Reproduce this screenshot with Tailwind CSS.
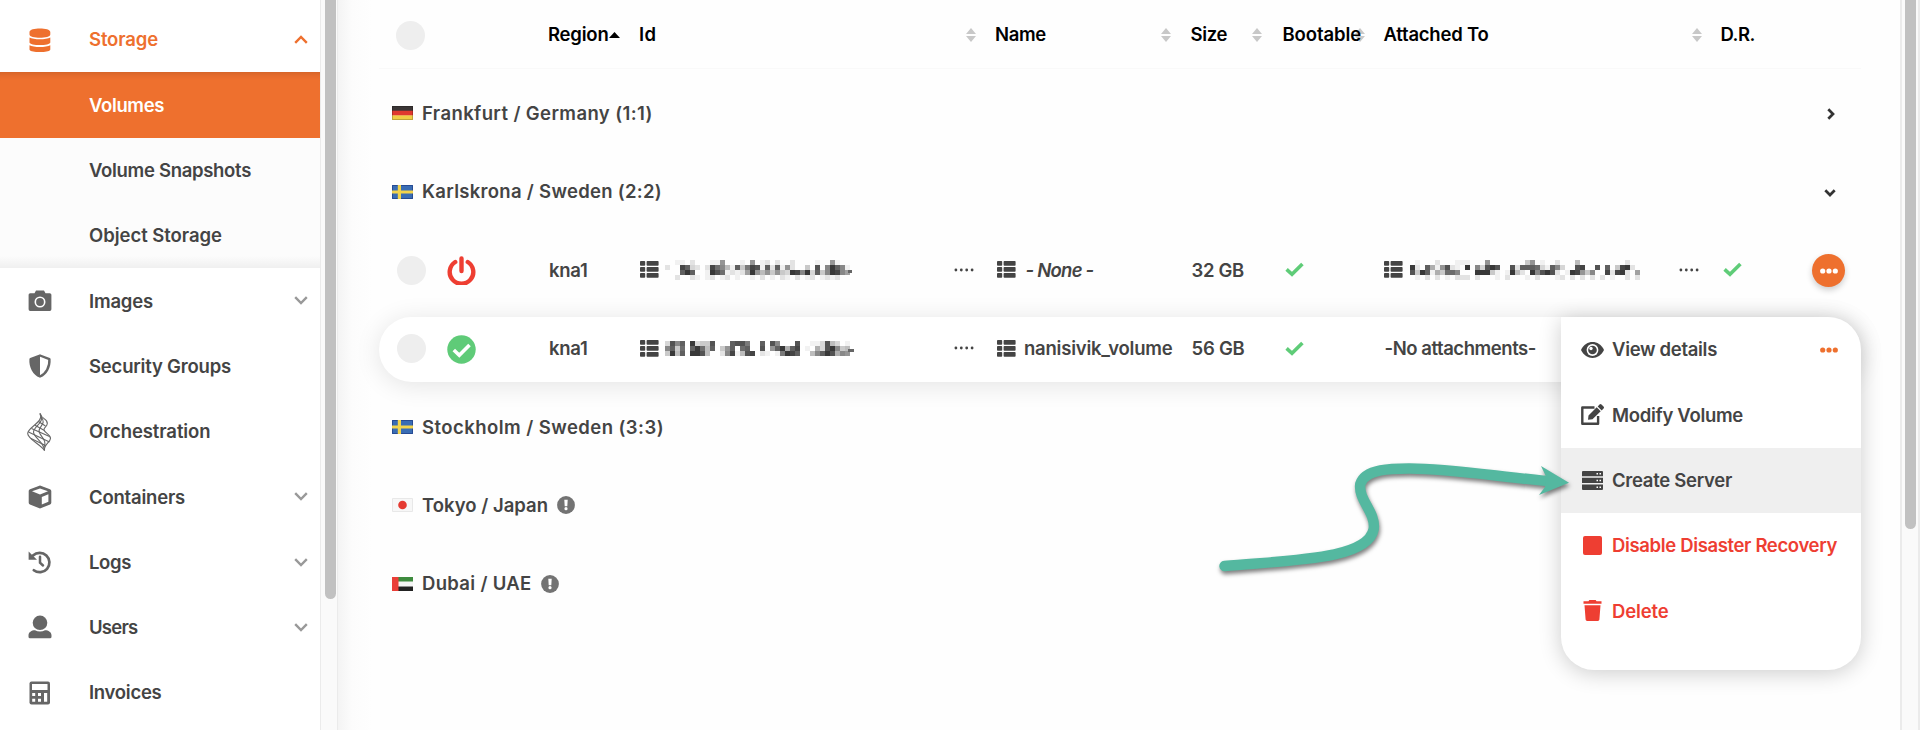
<!DOCTYPE html>
<html lang="en">
<head>
<meta charset="utf-8">
<title>Volumes</title>
<script src="https://cdn.jsdelivr.net/npm/@tailwindcss/browser@4"></script>
</head>
<body class="relative flex h-[730px] w-[1920px] overflow-hidden bg-[#fefefe] font-['Inter','Liberation_Sans',sans-serif] text-[18.5px] leading-none font-semibold text-[#444] whitespace-nowrap [&_svg]:shrink-0 [&_i]:shrink-0">

<svg class="hidden">
  <symbol id="chev" viewBox="0 0 14 9"><path d="M1.2 1.2 7 7l5.800-5.800" fill="none" stroke="currentColor" stroke-width="2.400"/></symbol>
  <symbol id="list" viewBox="0 0 19 17"><g fill="currentColor"><rect x="0" y="0" width="5.200" height="4.700" rx=".8"/><rect x="0" y="6" width="5.200" height="4.700" rx=".8"/><rect x="0" y="12" width="5.200" height="4.700" rx=".8"/><rect x="6.600" y="0" width="12" height="4.700" rx=".8"/><rect x="6.600" y="6" width="12" height="4.700" rx=".8"/><rect x="6.600" y="12" width="12" height="4.700" rx=".8"/></g></symbol>
  <symbol id="sort" viewBox="0 0 10 14"><path d="M0 6 5 0l5 6zM0 8h10l-5 6z" fill="#c8c8c8"/></symbol>
  <symbol id="check" viewBox="0 0 19 15"><path d="M1.600 7.400 7 12.300 17.400 2" fill="none" stroke="#5fcc78" stroke-width="3.600"/></symbol>
  <symbol id="dots4" viewBox="0 0 20 4"><g fill="#444"><circle cx="1.900" cy="2" r="1.400"/><circle cx="7.300" cy="2" r="1.400"/><circle cx="12.700" cy="2" r="1.400"/><circle cx="18.100" cy="2" r="1.400"/></g></symbol>
  <symbol id="dots3" viewBox="0 0 18 6"><g fill="currentColor"><circle cx="2.700" cy="3" r="2.600"/><circle cx="9" cy="3" r="2.600"/><circle cx="15.300" cy="3" r="2.600"/></g></symbol>
  <symbol id="warn" viewBox="0 0 18 18"><circle cx="9" cy="9" r="8.900" fill="#737373"/><path d="M7.300 3.700h3.400l-.4 6.500H7.700z" fill="#fff"/><circle cx="9" cy="12.700" r="1.600" fill="#fff"/></symbol>
  <symbol id="sweden" viewBox="0 0 21 14"><path d="M0 0h21v14H0z" fill="#3a6db4"/><path d="M.5.500h20v13H.5z" fill="none" stroke="#274b93"/><path d="M0 5.400h21v3.200H0zM5.800 0H9v14H5.800z" fill="#f3d44c"/></symbol>
  <linearGradient id="gloss" x1="0" y1="0" x2="0" y2="1"><stop offset="0" stop-color="#fff" stop-opacity=".3"/><stop offset="1" stop-color="#fff" stop-opacity="0"/></linearGradient>
</svg>

<!-- Sidebar -->
<aside class="flex h-full w-[320px] shrink-0 flex-col bg-white pt-[7px] text-[#444]">
  <a class="flex h-[65.3px] shrink-0 items-center pl-[27.5px] text-[#ee702e]">
    <svg class="size-6" viewBox="0 0 24 24" fill="currentColor"><path d="M1.500 4C1.500-.6 22.300-.6 22.300 4v2.500c0 4.300-20.800 4.300-20.800 0zM1.500 9.500c4 2.400 16.800 2.400 20.800 0v5c0 3.400-20.800 3.400-20.800 0zM1.500 17.200c4 2.400 16.800 2.400 20.800 0v4.300c0 3.400-20.800 3.400-20.800 0z"/></svg>
    <span class="ml-[37.5px]" data-w="69">Storage</span>
    <svg class="mr-[12.500px] ml-auto h-[9px] w-[14px] rotate-180"><use href="#chev"/></svg>
  </a>
  <div class="relative flex h-[196px] shrink-0 flex-col bg-[#fcfcfc] after:absolute after:inset-x-0 after:bottom-0 after:h-3 after:bg-linear-to-t after:from-black/[.05] after:to-transparent">
    <a class="flex h-[65.3px] items-center bg-[#ee702e] pl-[89px] text-white shadow-[inset_0_9px_9px_-9px_rgba(0,0,0,.2)]"><span data-w="75">Volumes</span></a>
    <a class="flex h-[65.3px] items-center pl-[89px]"><span data-w="162">Volume Snapshots</span></a>
    <a class="flex h-[65.3px] items-center pl-[89px]"><span data-w="133">Object Storage</span></a>
  </div>
  <a class="flex h-[65.3px] shrink-0 items-center pl-[27.5px]">
    <svg class="size-6 text-[#666]" viewBox="0 0 24 24"><path d="M2.200 4.200H6.500L8 1.400h8l1.500 2.800h4.300a1.600 1.600 0 0 1 1.600 1.600v14.500a1.600 1.600 0 0 1-1.600 1.600H2.200a1.600 1.600 0 0 1-1.600-1.600V5.800a1.600 1.600 0 0 1 1.600-1.600z" fill="currentColor"/><circle cx="12" cy="13" r="4.700" fill="none" stroke="#fff" stroke-width="1.600"/></svg>
    <span class="ml-[37.5px]" data-w="64">Images</span>
    <svg class="mr-[12.500px] ml-auto h-[9px] w-[14px] text-[#999]"><use href="#chev"/></svg>
  </a>
  <a class="flex h-[65.3px] shrink-0 items-center pl-[27.5px]">
    <svg class="size-6 text-[#666]" viewBox="0 0 24 24"><path d="M12 1.500 21.400 5.200C22 13 18 20 12 22.500 6 20 2 13 2.600 5.200z" fill="none" stroke="currentColor" stroke-width="2.400" stroke-linejoin="round"/><path d="M12 1.500 2.600 5.200C2 13 6 20 12 22.500z" fill="currentColor"/></svg>
    <span class="ml-[37.5px]" data-w="142">Security Groups</span>
  </a>
  <a class="flex h-[65.3px] shrink-0 items-center pl-[27px]">
    <svg class="h-[38px] w-[25px] text-[#666]" viewBox="0 0 25 38" fill="none" stroke="currentColor" stroke-width="1.100"><path d="M13 .500C14 6 20.800 5.500 20.300 10.500 20 14 16.500 14.500 17 17c1 3.500 6.800 4.500 6.500 8.500S16.500 31.500 17.500 37.500"/><path d="M13 .500C17.500 9 .7 14 .7 20.500.7 26 13 31 17.500 37.500"/><path d="M13 .500C19 9 6.500 13.500 6.500 19S17 28.500 17.500 37.500"/><path d="M14 4C20 10 12 13.500 12 18s9 9.500 5 16"/><path d="M11.800 8.800 18.500 13M8 12.200l9 5M4.500 15.500l18 8M1.500 19l21 10M4 25.500l14.500 7"/></svg>
    <span class="ml-[37px]" data-w="121.5">Orchestration</span>
  </a>
  <a class="flex h-[65.3px] shrink-0 items-center pl-[27.5px]">
    <svg class="size-6 text-[#666]" viewBox="0 0 24 24"><path d="M12 .6 22 4.200a2 2 0 0 1 1.300 1.900v11.600a2 2 0 0 1-1.200 1.800L12 23.600 1.900 19.500a2 2 0 0 1-1.200-1.800V6.100A2 2 0 0 1 2 4.200z" fill="currentColor"/><path d="M12 3.500 20 6.300 12 9.500 4 6.300zM13.800 12l6.600-2.700v7.500l-6.600 2.800z" fill="#fff"/></svg>
    <span class="ml-[37.5px]" data-w="96">Containers</span>
    <svg class="mr-[12.500px] ml-auto h-[9px] w-[14px] text-[#999]"><use href="#chev"/></svg>
  </a>
  <a class="flex h-[65.3px] shrink-0 items-center pl-[27.5px]">
    <svg class="size-6 text-[#666]" viewBox="0 0 24 24"><path d="M5 5.500A9.700 9.700 0 1 1 5.800 20.200" fill="none" stroke="currentColor" stroke-width="2.700" stroke-linecap="round"/><path d="M.6 1.500v8.300H9z" fill="currentColor"/><path d="M12 6.800v6l3 2.700" fill="none" stroke="currentColor" stroke-width="2.500" stroke-linecap="round"/></svg>
    <span class="ml-[37.5px]" data-w="42">Logs</span>
    <svg class="mr-[12.500px] ml-auto h-[9px] w-[14px] text-[#999]"><use href="#chev"/></svg>
  </a>
  <a class="flex h-[65.3px] shrink-0 items-center pl-[27.5px]">
    <svg class="size-6 text-[#666]" viewBox="0 0 24 24" fill="currentColor"><circle cx="12" cy="7.800" r="7.300"/><path d="M7 15.200c3 1.700 7 1.700 10 0 3.500 0 6.500 2 6.500 5v1.600a1.500 1.500 0 0 1-1.500 1.500H2A1.500 1.500 0 0 1 .5 21.800v-1.600c0-3 3-5 6.500-5z"/></svg>
    <span class="ml-[37.5px]" data-w="48.500">Users</span>
    <svg class="mr-[12.500px] ml-auto h-[9px] w-[14px] text-[#999]"><use href="#chev"/></svg>
  </a>
  <a class="flex h-[65.3px] shrink-0 items-center pl-[27.5px]">
    <svg class="size-6 text-[#666]" viewBox="0 0 24 24"><rect x="1.500" y=".6" width="20.500" height="23" rx="2" fill="currentColor"/><path d="M4 3h15.500v6H4zM4.200 12h3v3h-3zM10 12h3v3h-3zM4.200 17.800h3v3h-3zM10 17.800h3v3h-3zM16 12h3.200v8.800H16z" fill="#fff"/></svg>
    <span class="ml-[37.5px]" data-w="72.500">Invoices</span>
  </a>
</aside>

<!-- Sidebar scrollbar -->
<div class="flex h-full w-[18px] shrink-0 border-x border-[#ebebeb] bg-[#fafafa] pl-1">
  <div class="h-[599px] w-[11px] rounded-b-full bg-[#c1c1c1]"></div>
</div>

<main class="h-full w-[1562px] shrink-0 bg-linear-to-r from-[#f4f4f4] via-[#fcfcfc] via-[14px] to-[#fefefe] to-[34px] pl-[41px]">
  <!-- Column headings -->
  <div class="flex h-[69px] w-[1482px] items-center border-b border-[#f9f9f9] bg-[#fefefe] pt-px pl-[16.500px] text-black">
    <i class="mt-px size-[29px] rounded-full bg-[#eee]"></i>
    <span class="ml-[123.500px]" data-w="60.500">Region</span><svg class="h-[6px] w-[11px]" viewBox="0 0 11 6"><path d="M0 6 5.500 0 11 6z"/></svg>
    <div class="ml-[19.500px] flex w-[356px] items-center"><span data-w="17.500">Id</span><svg class="mr-[19.500px] ml-auto h-3.5 w-2.5"><use href="#sort"/></svg></div>
    <div class="flex w-[195.500px] items-center"><span data-w="51">Name</span><svg class="mr-[19.500px] ml-auto h-3.5 w-2.5"><use href="#sort"/></svg></div>
    <div class="flex w-[92px] items-center"><span data-w="36.500">Size</span><svg class="mr-[20.500px] ml-auto h-3.5 w-2.5"><use href="#sort"/></svg></div>
    <div class="flex w-[101px] items-center"><span class="relative z-10" data-w="78.500">Bootable</span><svg class="-ml-[6px] h-3.5 w-2.5"><use href="#sort"/></svg></div>
    <div class="flex w-[337px] items-center"><span data-w="105">Attached To</span><svg class="mr-[19px] ml-auto h-3.5 w-2.5"><use href="#sort"/></svg></div>
    <span data-w="34.500">D.R.</span>
  </div>

  <div class="flex w-[1482px] flex-col pt-[6px]">
    <div class="flex h-[78.4px] items-center pr-[26px] pb-0.5 pl-[13px]">
      <svg class="mr-[9px] h-3.5 w-[21px]" viewBox="0 0 21 14"><path d="M0 0h21v5H0z" fill="#3a3535"/><path d="M0 4.700h21v5H0z" fill="#e0382f"/><path d="M0 9.400h21V14H0z" fill="#f0cd45"/><path d="M0 0h21v7H0z" fill="url(#gloss)"/><path d="M.5.500h20v13H.5z" fill="none" stroke="#000" stroke-opacity=".2"/></svg>
      <span data-w="230.500">Frankfurt / Germany (1:1)</span>
      <svg class="mt-0.5 ml-auto h-3 w-2 text-[#333]" viewBox="0 0 8 12"><path d="M1.300 1.300 6 6l-4.700 4.700" fill="none" stroke="currentColor" stroke-width="2.700"/></svg>
    </div>
    <div class="flex h-[78.4px] items-center pr-[25px] pb-0.5 pl-[13px]">
      <svg class="mr-[9px] h-3.5 w-[21px]"><use href="#sweden"/></svg>
      <span data-w="240">Karlskrona / Sweden (2:2)</span>
      <svg class="mt-0.5 ml-auto h-2 w-3 text-[#333]" viewBox="0 0 12 8"><path d="M1.300 1.300 6 6l4.700-4.700" fill="none" stroke="currentColor" stroke-width="2.700"/></svg>
    </div>

    <!-- Volume rows -->
    <div class="flex h-[78.4px] items-center pb-0.5 pl-[17.500px]">
      <i class="mt-0.5 size-[29px] rounded-full bg-[#eee]"></i>
      <svg class="mt-0.5 ml-[21px] h-[29px] w-[29px]" viewBox="0 0 29 29" fill="none" stroke="#ee3e32" stroke-width="4.400" stroke-linecap="round"><path d="M8.200 6A11.800 11.800 0 1 0 20.800 6M14.500 2.500v12.500"/></svg>
      <span class="ml-[73.500px]" data-w="38.500">kna1</span>
      <div class="ml-[52px] flex w-[357px] items-center"><svg class="h-[17px] w-[19px]"><use href="#list"/></svg><svg class="ml-[6px] h-5 w-[187px]" data-mosaic="0011020001180001080120200200001008100|200ec3202eb951c4aed1c2c1820040d09fc91|000cfc001fdb12127f8584843fe9f3c49fe97|002002101201201001020102102012012120"></svg><b class="-ml-1 mt-1 h-[3px] w-1 bg-[#666]"></b><svg class="mr-[23px] ml-auto h-1 w-5"><use href="#dots4"/></svg></div>
      <div class="flex w-[195px] items-center"><svg class="h-[17px] w-[19px]"><use href="#list"/></svg><em class="ml-[10px]" data-w="68">- None -</em></div>
      <div class="w-[93px]"><span data-w="52.500">32 GB</span></div>
      <svg class="h-[15px] w-[19px]"><use href="#check"/></svg>
      <div class="ml-[80px] flex w-[339px] items-center"><svg class="h-[17px] w-[19px]"><use href="#list"/></svg><svg class="ml-[7px] h-5 w-[235px]" data-mosaic="0100020001110008000000048010020005000000000200|f20c618d210f093dfd00d2cccb31c9300de00d0c04ef20|d4fc164bb9000fff4101f520f9dfd201fe84900e2ef207|0102020102220200010200010200012020202020100202"></svg><svg class="mr-[24px] ml-auto h-1 w-5"><use href="#dots4"/></svg></div>
      <svg class="h-[15px] w-[19px]"><use href="#check"/></svg>
      <span class="mt-0.5 ml-[70.500px] flex size-[33px] items-center justify-center rounded-full bg-[#ee702e] text-white shadow-[0_3px_6px_rgba(0,0,0,.2)]"><svg class="h-1.5 w-[18px]"><use href="#dots3"/></svg></span>
    </div>
    <div class="my-[6.500px] flex h-[65.4px] items-center rounded-[33px] bg-white pb-0.5 pl-[17.500px] shadow-[0_3px_26px_rgba(0,0,0,.11)]">
      <i class="mt-px size-[29px] rounded-full bg-[#eee]"></i>
      <svg class="mt-0.5 ml-[21px] h-[29px] w-[29px]" viewBox="0 0 29 29"><circle cx="14.500" cy="14.500" r="14.200" fill="#5fcb78"/><path d="M6.800 15 12.300 20.300 22.500 10" fill="none" stroke="#fff" stroke-width="3.600"/></svg>
      <span class="ml-[73.500px]" data-w="38.500">kna1</span>
      <div class="ml-[52px] flex w-[357px] items-center"><svg class="h-[17px] w-[19px]"><use href="#list"/></svg><svg class="ml-[6px] h-[15px] w-[187px]" data-mosaic="3d9c0f344d000cdda00c0d9000d00113d5301|9c4b0cfb5c048c0bc00d08cf6ce01063df945|4f5c0ffd50029e15de02101afec0059cfd698"></svg><b class="-ml-1 mt-1 h-[3px] w-1.5 bg-[#666]"></b><svg class="mr-[23px] ml-auto h-1 w-5"><use href="#dots4"/></svg></div>
      <div class="flex w-[195px] items-center"><svg class="h-[17px] w-[19px]"><use href="#list"/></svg><span class="ml-[8.500px]" data-w="148.500">nanisivik_volume</span></div>
      <div class="w-[93px]"><span data-w="53">56 GB</span></div>
      <svg class="h-[15px] w-[19px]"><use href="#check"/></svg>
      <span class="ml-[81px]" data-w="151.500">-No attachments-</span>
    </div>

    <div class="flex h-[78.4px] items-center pb-0.5 pl-[13px]">
      <svg class="mr-[9px] h-3.5 w-[21px]"><use href="#sweden"/></svg>
      <span data-w="242">Stockholm / Sweden (3:3)</span>
    </div>
    <div class="flex h-[78.4px] items-center pb-0.5 pl-[13px]">
      <svg class="mr-[9px] h-3.5 w-[21px]" viewBox="0 0 21 14"><path d="M.5.500h20v13H.5z" fill="#f7f7f7" stroke="#e8e8e8"/><circle cx="10.500" cy="7" r="4.300" fill="#e53a31"/></svg>
      <span data-w="126">Tokyo / Japan</span>
      <svg class="ml-[9px] size-[18px]"><use href="#warn"/></svg>
    </div>
    <div class="flex h-[78.4px] items-center pb-0.5 pl-[13px]">
      <svg class="mr-[9px] h-3.5 w-[21px]" viewBox="0 0 21 14"><path d="M0 0h21v5H0z" fill="#3e8b3e"/><path d="M0 4.500h21v5H0z" fill="#f5f5f5"/><path d="M0 9.500h21V14H0z" fill="#222"/><path d="M0 0h6.500v14H0z" fill="#ea3f38"/><path d="M0 0h21v7H0z" fill="url(#gloss)"/></svg>
      <span data-w="109.500">Dubai / UAE</span>
      <svg class="ml-[9px] size-[18px]"><use href="#warn"/></svg>
    </div>
  </div>
</main>

<!-- Page scrollbar -->
<div class="flex h-full w-[20px] shrink-0 border-x-2 border-[#ebebeb] bg-[#fafafa] pl-[3px]">
  <div class="h-[529px] w-[11px] rounded-b-full bg-[#c1c1c1]"></div>
</div>

<!-- Row action menu -->
<div class="absolute top-[317px] left-[1561px] flex h-[353px] w-[300px] flex-col rounded-[33px] rounded-tl-none bg-white shadow-[0_3px_22px_rgba(0,0,0,.2)]">
  <a class="flex h-[65.3px] items-center pr-[23px] pl-5">
    <svg class="h-4 w-[23px]" viewBox="0 0 23 16"><path d="M0 8C5-2.600 18-2.600 23 8 18 18.600 5 18.600 0 8z" fill="#444"/><circle cx="11.500" cy="8" r="5.900" fill="#fff"/><circle cx="11.500" cy="8" r="4.300" fill="#444"/><circle cx="10" cy="6.500" r="1.700" fill="#fff"/></svg>
    <span class="ml-2" data-w="105">View details</span>
    <svg class="ml-auto h-1.5 w-[18px] text-[#ee702e]"><use href="#dots3"/></svg>
  </a>
  <a class="flex h-[65.3px] items-center pl-5">
    <svg class="h-[21px] w-[23px]" viewBox="0 0 23 21"><path d="M13.500 3.500H1.300v16.200h15.800V12" fill="none" stroke="#444" stroke-width="2.400" stroke-linejoin="round"/><path d="M7 15.800 7.500 11.500 15.700 3.300l4 4L11.500 15.300zM16.700 2.400 18.500.6a1.400 1.400 0 0 1 2 0l2 2a1.400 1.400 0 0 1 0 2L20.700 6.400z" fill="#444"/></svg>
    <span class="ml-2" data-w="131">Modify Volume</span>
  </a>
  <a class="flex h-[65.3px] items-center bg-[#efefef] pl-[21px]">
    <svg class="h-[19px] w-[21px]" viewBox="0 0 21 19"><path d="M1 0h19a1 1 0 0 1 1 1v4.200H0V1a1 1 0 0 1 1-1zM0 6.700h21v5.400H0zM0 13.600h21V18a1 1 0 0 1-1 1H1a1 1 0 0 1-1-1z" fill="#444"/><path d="M14.500 1.900h1.500v1.500h-1.500zM17.500 1.900H19v1.500h-1.500zM14.500 8.700h1.500v1.500h-1.500zM17.500 8.700H19v1.500h-1.500zM14.500 15.500h1.500V17h-1.500zM17.500 15.500H19V17h-1.500z" fill="#fff"/></svg>
    <span class="ml-[9px]" data-w="120">Create Server</span>
  </a>
  <a class="flex h-[65.3px] items-center pl-[22px] text-[#ee3e32]">
    <i class="size-[19px] rounded-[2px] bg-[#ee3e32]"></i>
    <span class="ml-[10px]" data-w="225">Disable Disaster Recovery</span>
  </a>
  <a class="flex h-[65.3px] items-center pl-[22px] text-[#ee3e32]">
    <svg class="h-[21px] w-[19px]" viewBox="0 0 19 21" fill="currentColor"><path d="M.5 1.300h5L6.300 0h6.400l.8 1.300h5v2.500H.5zM1.500 5.200h16l-1.100 14.400a1.500 1.500 0 0 1-1.500 1.400H4.100a1.500 1.500 0 0 1-1.500-1.400z"/></svg>
    <span class="ml-[10px]" data-w="56.500">Delete</span>
  </a>
</div>

<!-- Annotation arrow -->
<svg class="absolute top-[440px] left-[1200px] h-[150px] w-[400px] drop-shadow-[1px_3px_2px_rgba(0,0,0,.5)]" viewBox="1200 440 400 150"><path d="M1224.500 566C1290 560 1368 560 1373.700 529 1376 512 1358 500 1360.300 484 1365 468 1395 468.500 1410 468.500 1450 468.500 1500 477 1550 481.300" fill="none" stroke="#54b8a0" stroke-width="10.500" stroke-linecap="round"/><path d="M1569 482.700 1541 466 1546 476.500 1545 487 1539 495z" fill="#54b8a0"/></svg>

<script>
  // Letter-spacing that sets each label to its measure, once fonts and styles are in.
  const fit = () => document.querySelectorAll('[data-w]').forEach(el => {
    const w = parseFloat(el.dataset.w);
    el.style.display = 'inline-block';
    el.style.flex = 'none';
    el.style.width = 'auto';
    el.style.letterSpacing = '0px';
    const gap = (w - el.getBoundingClientRect().width) / el.textContent.length;
    el.style.letterSpacing = gap.toFixed(3) + 'px';
    el.style.width = w + 'px';
  });
  fit();
  document.fonts.ready.then(fit);
  window.addEventListener('load', () => {
    fit();
    requestAnimationFrame(fit);
    setTimeout(fit, 60);
  });
  // Redacted ids: one hex digit of darkness per 5px cell.
  document.querySelectorAll('[data-mosaic]').forEach(svg => {
    svg.dataset.mosaic.split('|').forEach((row, y) => {
      [...row].forEach((c, x) => {
        const v = parseInt(c, 16);
        if (!v) return;
        const r = document.createElementNS('http://www.w3.org/2000/svg', 'rect');
        r.setAttribute('x', x * 5);
        r.setAttribute('y', y * 5);
        r.setAttribute('width', 5);
        r.setAttribute('height', 5);
        r.setAttribute('fill', '#383838');
        r.setAttribute('fill-opacity', v / 15);
        svg.appendChild(r);
      });
    });
  });
</script>
</body>
</html>
